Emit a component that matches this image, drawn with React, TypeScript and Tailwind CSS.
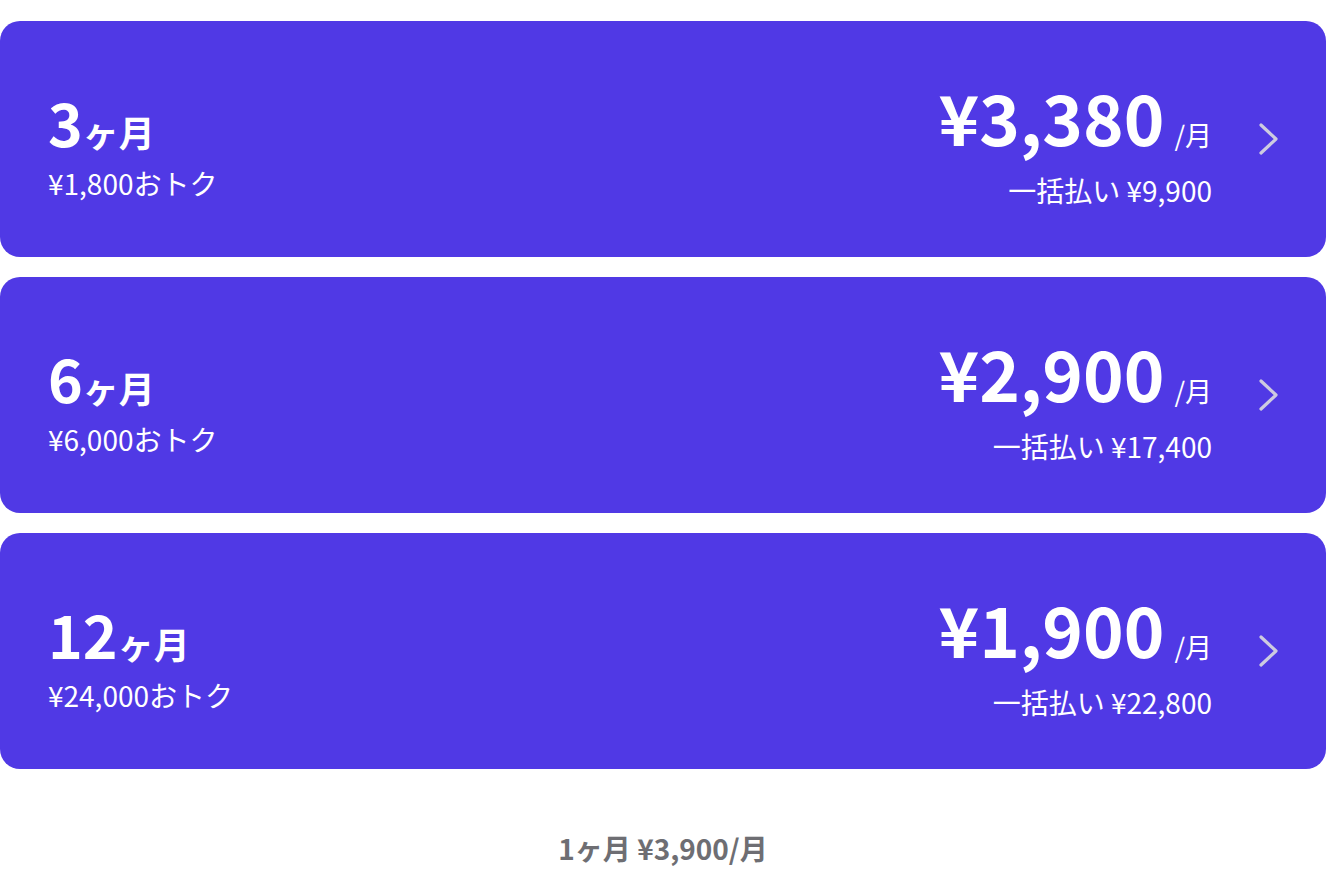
import React from 'react';

interface Plan {
    months: string;
    saving: string;
    price: string;
    total: string;
}

const plans: Plan[] = [
    { months: '3', saving: '¥1,800おトク', price: '¥3,380', total: '一括払い ¥9,900' },
    { months: '6', saving: '¥6,000おトク', price: '¥2,900', total: '一括払い ¥17,400' },
    { months: '12', saving: '¥24,000おトク', price: '¥1,900', total: '一括払い ¥22,800' },
];

const ChevronIcon: React.FC<React.SVGProps<SVGSVGElement>> = (props) => (
    <svg xmlns="http://www.w3.org/2000/svg" fill="none" viewBox="0 0 24 34" strokeWidth={3.2} stroke="currentColor" {...props}>
        <path strokeLinecap="round" strokeLinejoin="round" d="M5 3l15 14L5 31" />
    </svg>
);

const PlanCard: React.FC<{ plan: Plan }> = ({ plan }) => (
    <button className="flex h-[236px] w-full items-center justify-between rounded-[20px] bg-[#5039e5] pl-12 pr-[46px] text-left text-white">
        <div className="flex flex-col pt-[10px]">
            <div className="flex items-baseline font-bold leading-none">
                <span className="text-[59px]">{plan.months}</span>
                <span className="text-[36px]">ヶ月</span>
            </div>
            <span className="mt-[18px] text-[28px] leading-none">{plan.saving}</span>
        </div>

        <div className="flex items-center gap-[44px]">
            <div className="flex flex-col items-end pt-[8px]">
                <div className="flex items-baseline leading-none">
                    <span className="text-[69px] font-bold">{plan.price}</span>
                    <span className="ml-[10px] text-[27px]">/月</span>
                </div>
                <span className="mt-[25px] text-[28px] leading-none">{plan.total}</span>
            </div>
            <ChevronIcon className="h-[34px] w-[24px] text-[#cdcbe0]" />
        </div>
    </button>
);

export default function App() {
    return (
        <div className="min-h-screen bg-white pt-[21px]" style={{ fontFamily: '"Noto Sans CJK JP", "Noto Sans", sans-serif' }}>
            <div className="flex flex-col gap-5">
                {plans.map((p) => (
                    <PlanCard key={p.months} plan={p} />
                ))}
            </div>
            <p className="mt-[58px] text-center text-[28px] font-bold text-[#6e6e73]">1ヶ月 ¥3,900/月</p>
        </div>
    );
}
